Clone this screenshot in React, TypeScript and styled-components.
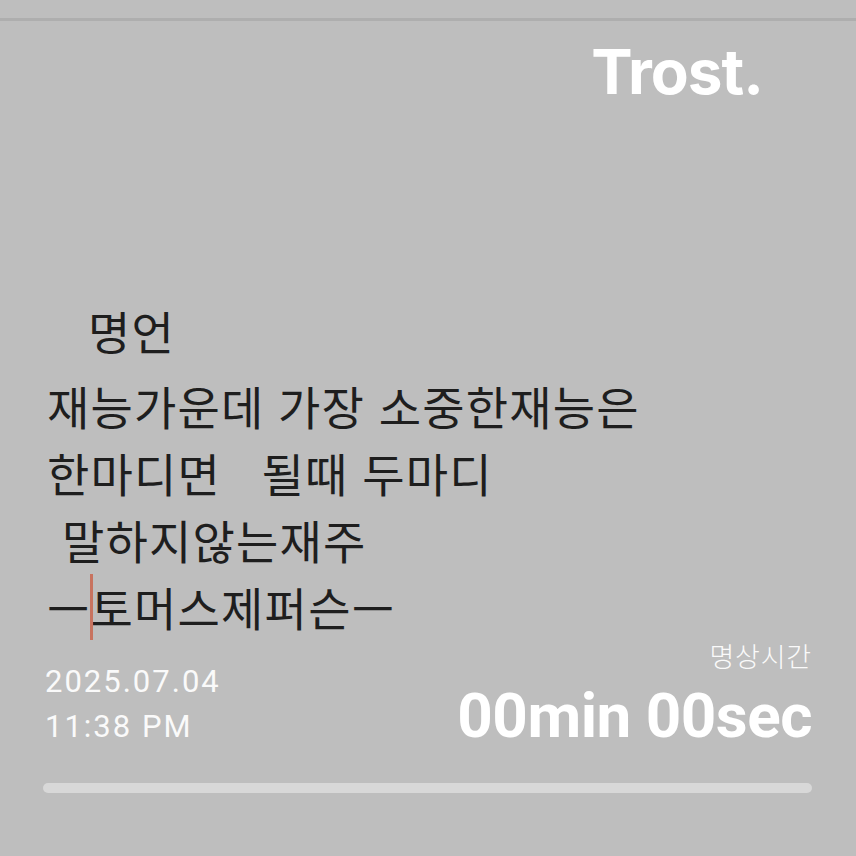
import React from 'react'
import styled, { createGlobalStyle } from 'styled-components'

const GlobalStyle = createGlobalStyle`
  html, body {
    margin: 0;
    padding: 0;
    background: #bebebe;
  }
  #root {
    width: 856px;
    height: 856px;
    overflow: hidden;
  }
`

const Screen = styled.div`
  width: 856px;
  height: 856px;
  background: #bebebe;
  display: flex;
  flex-direction: column;
  box-sizing: border-box;
`

const TopRule = styled.div`
  height: 3px;
  margin-top: 18px;
  background: #aeaeae;
`

const Header = styled.div`
  display: flex;
  justify-content: flex-end;
  padding-right: 93px;
  margin-top: 20px;
`

const Logo = styled.div`
  font-family: Inter, 'Liberation Sans', sans-serif;
  font-weight: 700;
  font-size: 62px;
  line-height: 62px;
  letter-spacing: -1px;
  color: #ffffff;
`

const Quote = styled.div`
  margin-top: 194px;
  padding-left: 47px;
  font-family: 'Noto Sans CJK KR', 'Noto Sans', sans-serif;
  font-weight: 400;
  font-size: 46px;
  line-height: 67px;
  letter-spacing: 1.2px;
  word-spacing: 2px;
  color: #1e1e1e;
`

const Line = styled.div<{ $indent?: number; $gap?: number }>`
  white-space: pre;
  padding-left: ${p => p.$indent ?? 0}px;
  margin-bottom: ${p => p.$gap ?? 0}px;
`

const Caret = styled.span`
  position: relative;
  display: inline-block;
  width: 0;
  height: 0;

  &::after {
    content: '';
    position: absolute;
    left: -1px;
    top: -52px;
    width: 3px;
    height: 66px;
    background: #c8735f;
  }
`

const Footer = styled.div`
  padding: 0 44px 0 45px;
  display: flex;
  justify-content: space-between;
  align-items: flex-start;
`

const Stamp = styled.div`
  padding-top: 19px;
  font-family: Roboto, 'Liberation Sans', sans-serif;
  font-weight: 400;
  font-size: 31px;
  line-height: 45px;
  letter-spacing: 2px;
  color: #fafafa;
`

const Timer = styled.div`
  display: flex;
  flex-direction: column;
  align-items: flex-end;
`

const TimerLabel = styled.div`
  font-family: 'Noto Sans CJK KR', 'Noto Sans', sans-serif;
  font-weight: 300;
  font-size: 27px;
  line-height: 32px;
  letter-spacing: 0.8px;
  color: #fafafa;
`

const TimerValue = styled.div`
  margin-top: 13px;
  font-family: Roboto, 'Liberation Sans', sans-serif;
  font-weight: 700;
  font-size: 62px;
  line-height: 62px;
  letter-spacing: -0.5px;
  color: #ffffff;
`

const Progress = styled.div`
  margin: 34px 44px 0 43px;
  height: 10px;
  border-radius: 5px;
  background: #d8d8d8;
`

export default function App() {
  return (
    <>
      <GlobalStyle />
      <Screen>
        <TopRule />
        <Header>
          <Logo>Trost.</Logo>
        </Header>

        <Quote>
          <Line $indent={41} $gap={8}>명언</Line>
          <Line>재능가운데 가장 소중한재능은</Line>
          <Line>{'한마디면   될때 두마디'}</Line>
          <Line $indent={15}>말하지않는재주</Line>
          <Line>
            ㅡ<Caret />토머스제퍼슨ㅡ
          </Line>
        </Quote>

        <Footer>
          <Stamp>
            <div>2025.07.04</div>
            <div>11:38 PM</div>
          </Stamp>
          <Timer>
            <TimerLabel>명상시간</TimerLabel>
            <TimerValue>00min 00sec</TimerValue>
          </Timer>
        </Footer>

        <Progress />
      </Screen>
    </>
  )
}
